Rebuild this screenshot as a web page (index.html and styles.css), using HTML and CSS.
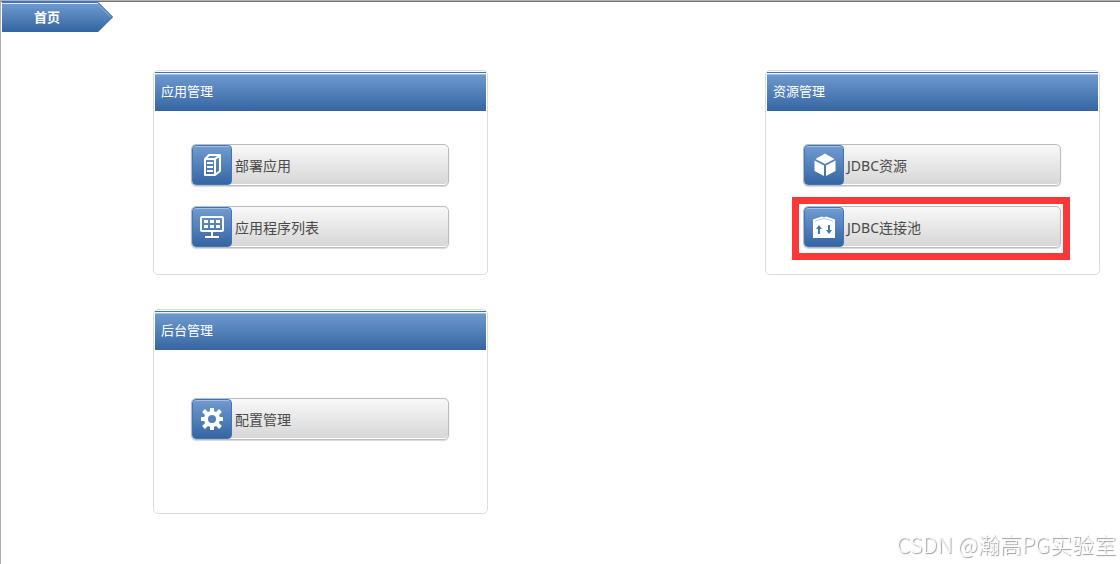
FILE: index.html
```html
<!DOCTYPE html>
<html lang="zh-CN">
<head>
    <meta charset="UTF-8">
    <title>首页</title>
    <link rel="stylesheet" href="styles.css">
</head>
<body>
    <nav class="breadcrumb">
        <a href="#" class="crumb">首页</a>
        <svg class="crumb-arrow" width="15" height="31" viewBox="0 0 15 31">
            <defs>
                <linearGradient id="crumbFill" x1="0" y1="0" x2="0" y2="1">
                    <stop offset="0" stop-color="#719bd0"/>
                    <stop offset="1" stop-color="#3566a2"/>
                </linearGradient>
            </defs>
            <path d="M0 1L15 16L0 31z" fill="url(#crumbFill)"/>
            <path d="M0 1.500L14.500 16L0 30.500" fill="none" stroke="#3a74b8"/>
            <path d="M0 3.500L12.500 16" fill="none" stroke="#8fb2dc"/>
        </svg>
    </nav>

    <main class="panels">
        <section class="panel">
            <h2 class="panel-title">应用管理</h2>
            <div class="panel-body">
                <button type="button" class="entry">
                    <span class="entry-icon">
                        <svg width="24" height="24" viewBox="0 0 24 24" fill="none" stroke="#fff" stroke-width="2">
                            <path d="M5 6h10v16H5zM5 6l4-4h11l-5 4M20 2v16l-5 4" stroke-linejoin="round"/>
                            <path d="M7 10h6M7 14h6M7 18h6"/>
                        </svg>
                    </span>
                    <span class="entry-text">部署应用</span>
                </button>
                <button type="button" class="entry">
                    <span class="entry-icon">
                        <svg width="24" height="24" viewBox="0 0 24 24" fill="none" stroke="#fff" stroke-width="2">
                            <rect x="1" y="2" width="22" height="14" rx="1"/>
                            <path d="M4 6.500h16M4 11.500h16" stroke-width="3" stroke-dasharray="4 2"/>
                            <path d="M12 16v5M5 22h14"/>
                        </svg>
                    </span>
                    <span class="entry-text">应用程序列表</span>
                </button>
            </div>
        </section>

        <section class="panel">
            <h2 class="panel-title">资源管理</h2>
            <div class="panel-body">
                <button type="button" class="entry">
                    <span class="entry-icon">
                        <svg width="24" height="24" viewBox="0 0 24 24" fill="#fff">
                            <path d="M13 .5L22.500 6L13 11L3.500 6z"/>
                            <path d="M2.500 7.500L12 12.500V23L2.500 18z"/>
                            <path d="M23.500 7.500L14 12.500V23L23.500 18z"/>
                        </svg>
                    </span>
                    <span class="entry-text">JDBC资源</span>
                </button>
                <button type="button" class="entry entry-marked">
                    <span class="entry-icon">
                        <svg width="24" height="24" viewBox="0 0 24 24">
                            <path d="M1 23V4.500L10 1.500L12 2.500L14 1.500L23 4.500V23z" fill="#fff"/>
                            <path d="M3 6L12 3.500L21 6" fill="none" stroke="#b9cde6"/>
                            <path d="M6 19v-5H4L7 10L10 14H8v5z" fill="#4577b5"/>
                            <path d="M16 10v5H14L17 19L20 15H18v-5z" fill="#4577b5"/>
                        </svg>
                    </span>
                    <span class="entry-text">JDBC连接池</span>
                </button>
            </div>
        </section>

        <section class="panel">
            <h2 class="panel-title">后台管理</h2>
            <div class="panel-body panel-body-single">
                <button type="button" class="entry">
                    <span class="entry-icon">
                        <svg width="24" height="24" viewBox="-12 -12 24 24" fill="none" stroke="#fff">
                            <circle r="6" stroke-width="4"/>
                            <path d="M0-7V-11M0 7V11M-7 0H-11M7 0H11M-5-5L-8.500-8.500M5-5L8.500-8.500M-5 5L-8.500 8.500M5 5L8.500 8.500" stroke-width="4"/>
                        </svg>
                    </span>
                    <span class="entry-text">配置管理</span>
                </button>
            </div>
        </section>
    </main>

    <div class="watermark">CSDN @瀚高PG实验室</div>
</body>
</html>
```
FILE: styles.css
```css
* {
    box-sizing: border-box;
}
body {
    margin: 0;
    min-height: 100vh;
    border-top: 1px solid #b0b0b0;
    border-left: 1px solid #b0b0b0;
    background: #fff;
    font-family: "Noto Sans", "Noto Sans CJK SC", sans-serif;
    font-size: 13px;
}
.breadcrumb {
    display: flex;
    padding-left: 1px;
    box-shadow: inset 0 1px #6f7478;
}
.crumb {
    width: 96px;
    height: 31px;
    padding-left: 32px;
    border-top: 2px solid #3a75bd;
    border-bottom: 1px solid #2f66ad;
    background: linear-gradient(#719bd0, #3566a2);
    box-shadow: inset 0 1px #e4edf7;
    color: #fff;
    font-weight: bold;
    line-height: 28px;
    text-decoration: none;
}
.crumb-arrow {
    display: block;
}
.panels {
    display: grid;
    grid-template-columns: 335px 335px;
    justify-content: space-between;
    row-gap: 34px;
    padding: 38px 20px 50px 152px;
}
.panel {
    min-height: 205px;
    padding: 1px;
    border: 1px solid #dcdcdc;
    border-radius: 5px;
}
.panel-title {
    height: 39px;
    margin: 0;
    padding-left: 6px;
    border-top: 1px solid #3a75bd;
    background: linear-gradient(#719bd0, #3566a2);
    box-shadow: inset 0 1px #f0f5fa, inset 0 2px #a3bcdc;
    color: #fff;
    font-size: 13px;
    font-weight: normal;
    line-height: 37px;
}
.panel-body {
    display: flex;
    flex-direction: column;
    gap: 20px;
    padding: 33px 37px 24px 36px;
}
.panel-body-single {
    padding-top: 48px;
}
.entry {
    position: relative;
    display: flex;
    align-items: center;
    height: 42px;
    padding: 0;
    border: 1px solid #b9bcbc;
    border-radius: 5px;
    background: linear-gradient(#f8f8f8, #d6d6d6);
    box-shadow: inset 0 -1px #fff, 0 1px 1px #d8d8d8;
    color: #4a4a4a;
    font-family: inherit;
    font-size: 14px;
    cursor: pointer;
}
.entry-icon {
    display: flex;
    align-items: center;
    justify-content: center;
    width: 40px;
    height: 40px;
    border: 1px solid #3a75bd;
    border-radius: 4px;
    background: linear-gradient(#719bd0, #3566a2);
    box-shadow: inset 0 1px #a3c0e2;
}
.entry-text {
    padding-left: 3px;
}
/* red frame round the highlighted entry */
.entry-marked::after {
    content: "";
    position: absolute;
    inset: -10px -10px -13px -12px;
    border: 7px solid #fb3838;
}
.watermark {
    position: fixed;
    right: 4px;
    bottom: 6px;
    color: #fbfbfb;
    font-family: "Noto Sans CJK SC", sans-serif;
    font-size: 22px;
    font-weight: 300;
    line-height: 30px;
    text-shadow: 1px 1px 1px #999;
}
```
